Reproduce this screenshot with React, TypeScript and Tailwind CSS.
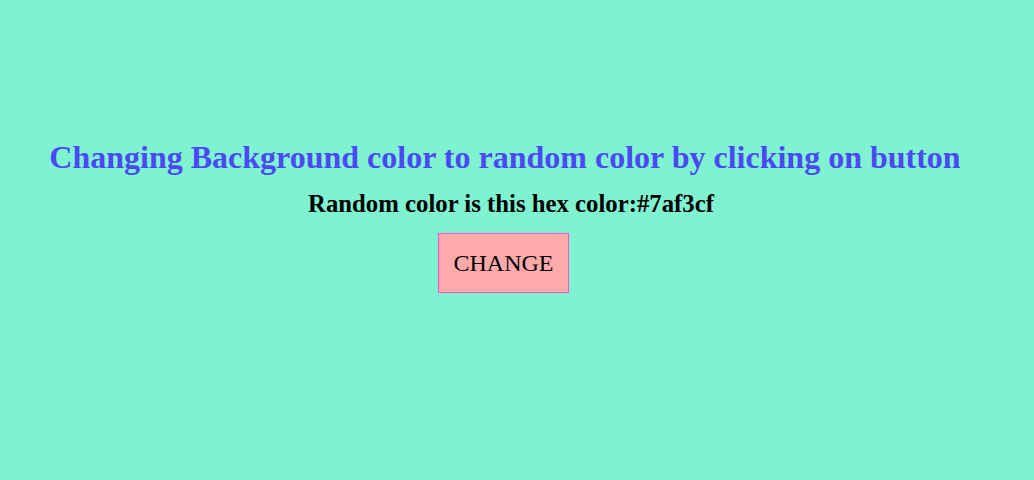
export default function App() {
  return (
    <div
      className="w-[1034px] h-[480px] bg-[#7ff3d0] flex flex-col items-center pt-[138px]"
      style={{ fontFamily: '"Liberation Serif", "Times New Roman", serif' }}
    >
      <h1 className="text-[32px] leading-[38px] font-bold text-[#4b48f6] mr-[24px]">
        Changing Background color to random color by clicking on button
      </h1>
      <h3 className="mt-[14px] text-[24.75px] leading-[28px] font-bold text-black ml-[-12px]">
        Random color is this hex color:#7af3cf
      </h3>
      <button className="mt-[15px] w-[131px] h-[60px] bg-[#ffaaaa] border border-[#ff52d4] text-[24px] leading-none text-black mr-[27px]">
        CHANGE
      </button>
    </div>
  );
}
